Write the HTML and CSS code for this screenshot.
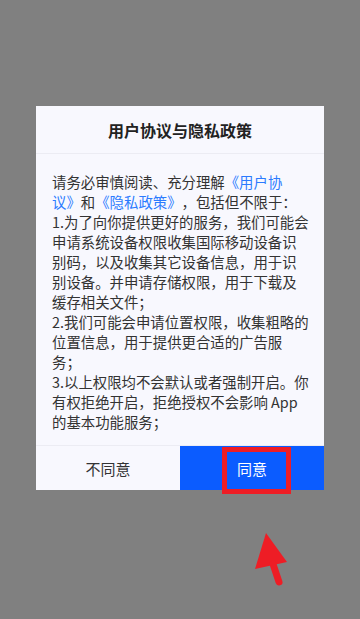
FILE: index.html
```html
<!DOCTYPE html>
<html lang="zh-CN">

<head>
    <meta charset="UTF-8">
    <meta name="viewport" content="width=device-width, initial-scale=1.0">
    <title>用户协议与隐私政策</title>
    <link rel="stylesheet" href="styles.css">
</head>

<body>
    <section class="mask">

        <div class="dialog">
            <h2 class="dialog-title">用户协议与隐私政策</h2>

            <div class="dialog-body">
                <p>请务必审慎阅读、充分理解<a href="#">《用户协议》</a>和<a href="#">《隐私政策》</a>，包括但不限于：</p>
                <p>1.为了向你提供更好的服务，我们可能会申请系统设备权限收集国际移动设备识别码，以及收集其它设备信息，用于识别设备。并申请存储权限，用于下载及缓存相关文件；</p>
                <p>2.我们可能会申请位置权限，收集粗略的位置信息，用于提供更合适的广告服务；</p>
                <p>3.以上权限均不会默认或者强制开启。你有权拒绝开启，拒绝授权不会影响 App 的基本功能服务；</p>
            </div>

            <div class="dialog-footer">
                <button class="btn btn-cancel">不同意</button>
                <button class="btn btn-ok">同意<span class="mark-box"></span></button>
            </div>
        </div>

        <svg class="mark-arrow" width="40" height="56" viewBox="0 0 40 56">
            <polygon points="13,1 2,37 34,30" fill="#ee1d25" />
            <line x1="20" y1="32" x2="26" y2="50" stroke="#ee1d25" stroke-width="7" stroke-linecap="round" />
        </svg>

    </section>
</body>

</html>
```

FILE: styles.css
```css
* {
    box-sizing: border-box;
}

body {
    margin: 0;
    background-color: #808080;
    font-family: "Noto Sans CJK SC", "Noto Sans", sans-serif;
}

.mask {
    position: relative;
    height: 619px;
    display: flex;
    justify-content: center;
    padding-top: 106px;
}

.dialog {
    width: 288px;
    height: 384px;
    background-color: #f8f8fe;
    display: flex;
    flex-direction: column;
}

.dialog-title {
    margin: 0;
    height: 48px;
    line-height: 48px;
    text-align: center;
    font-size: 16px;
    font-weight: 700;
    color: #222;
    border-bottom: 1px solid #ececf3;
}

.dialog-body {
    flex: 1;
    padding: 18px 14px 12px 16px;
    font-size: 14.4px;
    line-height: 20px;
    color: #333;
    text-spacing-trim: space-all;
}

.dialog-body p {
    margin: 0;
}

.dialog-body a {
    color: #2b7bff;
    text-decoration: none;
}

.dialog-footer {
    display: flex;
    height: 45px;
    border-top: 1px solid #ececf3;
}

.btn {
    flex: 1;
    border: none;
    font-family: inherit;
    font-size: 15px;
    cursor: pointer;
}

.btn-cancel {
    background-color: #f8f8fe;
    color: #333;
}

.btn-ok {
    position: relative;
    background-color: #0b5cff;
    color: #fff;
}

.mark-box {
    position: absolute;
    left: 42px;
    top: 1px;
    width: 69px;
    height: 47px;
    border: 5px solid #ee1d25;
}

.mark-arrow {
    position: absolute;
    left: 253px;
    top: 532px;
}
```
